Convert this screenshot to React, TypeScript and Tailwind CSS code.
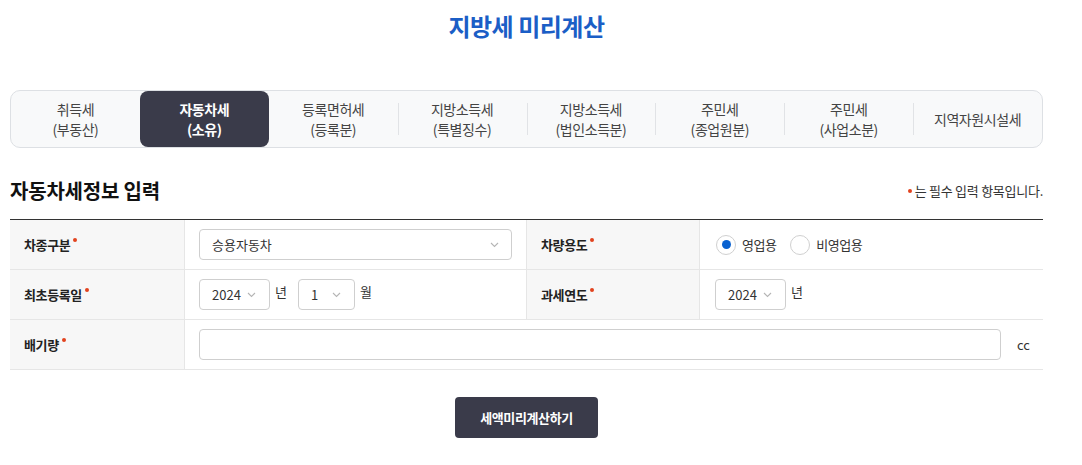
import React from "react";

const tabs = [
  ["취득세", "(부동산)"],
  ["자동차세", "(소유)"],
  ["등록면허세", "(등록분)"],
  ["지방소득세", "(특별징수)"],
  ["지방소득세", "(법인소득분)"],
  ["주민세", "(종업원분)"],
  ["주민세", "(사업소분)"],
  ["지역자원시설세"],
];

const ACTIVE = 1;

function Dot() {
  return <span className="ml-[3px] inline-block h-[4px] w-[4px] -translate-y-[5px] rounded-full bg-[#e2431e]" />;
}

function Chevron() {
  return (
    <svg width="9" height="6" viewBox="0 0 9 6" fill="none" className="shrink-0">
      <path d="M1 1l3.5 3.5L8 1" stroke="#b5b5b5" strokeWidth="1.1" />
    </svg>
  );
}

function Select({ value, width, chevronGap }: { value: string; width: string; chevronGap?: string }) {
  return (
    <div
      className={`flex h-[31px] items-center rounded-[4px] border border-[#cfcfcf] bg-white pl-[12px] pr-[12px] text-[13px] text-[#333] ${width}`}
    >
      <span className={chevronGap ?? "flex-1"}>{value}</span>
      <Chevron />
    </div>
  );
}

function Label({ children, className = "" }: { children: React.ReactNode; className?: string }) {
  return (
    <div className={`flex items-center bg-[#f7f7f7] pl-[14px] text-[13px] font-bold tracking-[-0.03em] text-[#222] ${className}`}>
      {children}
      <Dot />
    </div>
  );
}

function Radio({ checked, label }: { checked?: boolean; label: string }) {
  return (
    <label className="flex items-center gap-[6px]">
      <span className="flex h-[20px] w-[20px] items-center justify-center rounded-full border border-[#d0d0d0] bg-white">
        {checked && <span className="h-[9px] w-[9px] rounded-full bg-[#0a62d0]" />}
      </span>
      <span className="text-[13px] tracking-[-0.04em] text-[#333]">{label}</span>
    </label>
  );
}

export default function App() {
  return (
    <div className="min-h-[465px] bg-white font-['Noto_Sans_CJK_KR','Noto_Sans',sans-serif] text-[#333]">
      <div className="ml-[10px] w-[1033px] pb-[27px]">
        <h1 className="pt-[10px] text-center text-[24px] font-bold leading-[32px] tracking-[-0.02em] text-[#1b5ec6]">
          지방세 미리계산
        </h1>

        <div className="mt-[48px] grid h-[58px] grid-cols-8 rounded-[10px] border border-[#dde0e4] bg-[#f8f9fa]">
          {tabs.map((t, i) => {
            const active = i === ACTIVE;
            const divider = i > 0 && i !== ACTIVE && i !== ACTIVE + 1;
            return (
              <div key={i} className="relative flex items-center justify-center">
                {divider && <span className="absolute left-0 top-[12px] h-[32px] w-px bg-[#e1e3e6]" />}
                <div
                  className={`flex h-full w-full flex-col items-center justify-center rounded-[8px] text-[14px] leading-[20px] tracking-[-0.03em] ${
                    active ? "bg-[#3a3b4a] font-bold text-white" : "text-[#444]"
                  }`}
                >
                  {t.map((line) => (
                    <span key={line}>{line}</span>
                  ))}
                </div>
              </div>
            );
          })}
        </div>

        <div className="mt-[28px] flex items-center justify-between">
          <h2 className="text-[20px] font-bold leading-[30px] tracking-[-0.01em] text-[#111]">자동차세정보 입력</h2>
          <p className="flex items-center text-[13px] tracking-[-0.02em] text-[#333]">
            <span className="mr-[3px] inline-block h-[4px] w-[4px] rounded-full bg-[#e2431e]" />는 필수 입력 항목입니다.
          </p>
        </div>

        <div className="mt-[13px] grid grid-cols-[175px_342px_173px_343px] border-t border-[#333]">
          <Label className="h-[50px] border-b border-r border-[#e6e6e6]">차종구분</Label>
          <div className="flex items-center border-b border-r border-[#e6e6e6] px-[14px]">
            <Select value="승용자동차" width="w-full" />
          </div>
          <Label className="border-b border-r border-[#e6e6e6]">차량용도</Label>
          <div className="flex items-center gap-[14px] border-b border-[#e6e6e6] pl-[16px]">
            <Radio checked label="영업용" />
            <Radio label="비영업용" />
          </div>

          <Label className="h-[50px] border-b border-r border-[#e6e6e6]">최초등록일</Label>
          <div className="flex items-center border-b border-r border-[#e6e6e6] px-[14px] text-[13px]">
            <Select value="2024" width="w-[71px]" chevronGap="mr-[6px]" />
            <span className="mb-[6px] ml-[5px] mr-[11px]">년</span>
            <Select value="1" width="w-[57px]" chevronGap="mr-[14px]" />
            <span className="mb-[6px] ml-[5px]">월</span>
          </div>
          <Label className="border-b border-r border-[#e6e6e6]">과세연도</Label>
          <div className="flex items-center border-b border-[#e6e6e6] pl-[15px] text-[13px]">
            <Select value="2024" width="w-[71px]" chevronGap="mr-[6px]" />
            <span className="mb-[6px] ml-[5px]">년</span>
          </div>

          <Label className="h-[50px] border-b border-r border-[#e6e6e6]">배기량</Label>
          <div className="col-span-3 flex items-center border-b border-[#e6e6e6] pl-[14px] pr-[13px]">
            <input className="h-[31px] flex-1 rounded-[4px] border border-[#cfcfcf] bg-white px-[10px] text-[13px] outline-none" />
            <span className="ml-[16px] text-[13px] text-[#333]">cc</span>
          </div>
        </div>

        <div className="mt-[27px] flex justify-center">
          <button className="h-[41px] w-[143px] rounded-[4px] bg-[#3a3b4a] text-[13px] font-bold tracking-[-0.03em] text-white">
            세액미리계산하기
          </button>
        </div>
      </div>
    </div>
  );
}
